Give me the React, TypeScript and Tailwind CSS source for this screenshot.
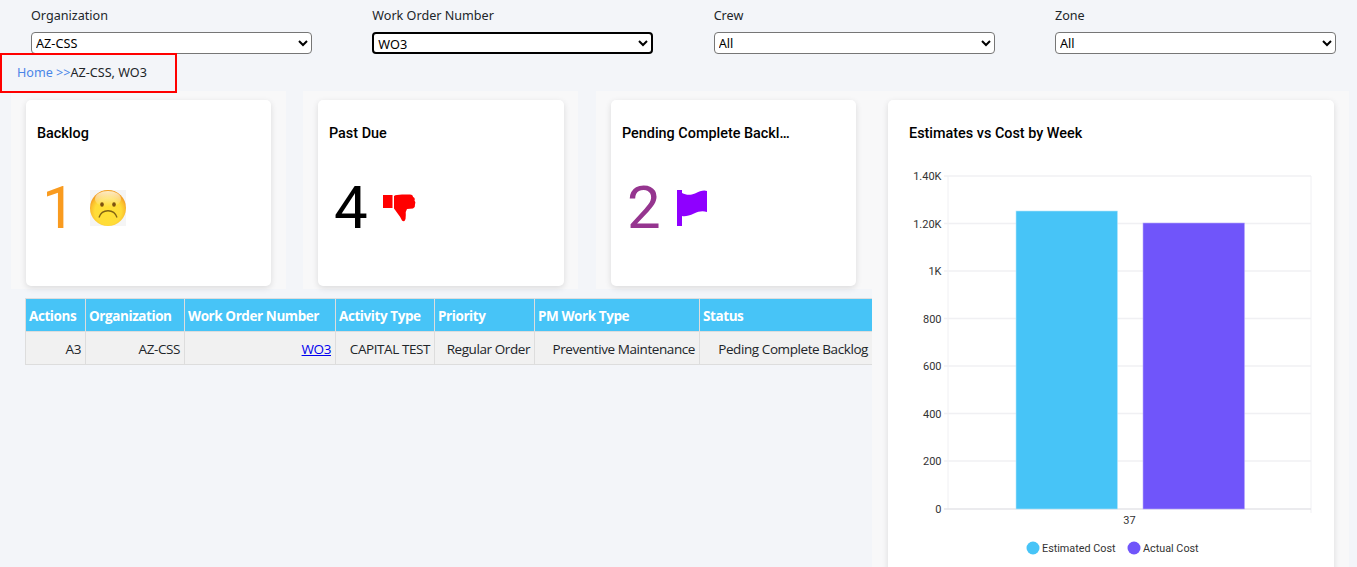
import React from 'react';

const filters = [
  { label: 'Organization', value: 'AZ-CSS' },
  { label: 'Work Order Number', value: 'WO3', focused: true },
  { label: 'Crew', value: 'All' },
  { label: 'Zone', value: 'All' },
];

const columns = [
  { title: 'Actions', width: 'w-[60px]' },
  { title: 'Organization', width: 'w-[99px]' },
  { title: 'Work Order Number', width: 'w-[151px]' },
  { title: 'Activity Type', width: 'w-[99px]' },
  { title: 'Priority', width: 'w-[100px]' },
  { title: 'PM Work Type', width: 'w-[165px]' },
  { title: 'Status', width: 'w-[173px]' },
];

const yTicks = [
  { label: '1.40K', y: 26 },
  { label: '1.20K', y: 73.5 },
  { label: '1K', y: 121 },
  { label: '800', y: 168.5 },
  { label: '600', y: 216 },
  { label: '400', y: 263.5 },
  { label: '200', y: 311 },
  { label: '0', y: 359 },
];

const SadFace = () => (
  <svg width="36" height="36" viewBox="0 0 36 36" className="bg-[#f5f5f5]">
    <defs>
      <radialGradient id="sadFill" cx="50%" cy="60%" r="54%">
        <stop offset="0%" stopColor="#ffe033" />
        <stop offset="68%" stopColor="#ffdc38" />
        <stop offset="88%" stopColor="#fbbf2d" />
        <stop offset="100%" stopColor="#f3a024" />
      </radialGradient>
      <linearGradient id="sadShine" x1="0" y1="0" x2="0" y2="1">
        <stop offset="0%" stopColor="#fff3d0" stopOpacity="0.95" />
        <stop offset="100%" stopColor="#fff3d0" stopOpacity="0" />
      </linearGradient>
    </defs>
    <circle cx="18" cy="18" r="18" fill="url(#sadFill)" />
    <ellipse cx="18" cy="9" rx="13" ry="8" fill="url(#sadShine)" />
    <ellipse cx="12" cy="14.5" rx="1.8" ry="2.2" fill="#7d5210" />
    <ellipse cx="24" cy="14.5" rx="1.8" ry="2.2" fill="#7d5210" />
    <path d="M9 27.5 C12 18.5 24 18.5 27 27.5" fill="none" stroke="#806214" strokeWidth="1.3" />
  </svg>
);

const ThumbDown = () => (
  <svg width="34" height="28" viewBox="0 0 34 28" fill="#ff0000">
    <rect x="1" y="1" width="9.5" height="13" />
    <path d="M12 2 Q14 .5 20 .5 L28 .5 Q31 .5 31 3 Q33.5 4 32.5 6.5 Q34 8 33 10.5 Q33.5 13 31 14.5 L25 15 Q23.5 17 23.8 21 Q24 25 22.5 27 Q21 27.5 20 26.5 Q18.5 23 16 20 Q13.5 16.5 12 14.5 Z" />
  </svg>
);

const Flag = () => (
  <svg width="33" height="36" viewBox="-1 0 33 36" fill="#8f00ff">
    <rect x="1" y="0" width="5" height="36" />
    <path d="M6 3 C10 5 14 5.5 19 3.5 C24 1 28 -.5 31 1 L31 22 C27 20.5 23 21 18 23.5 C13 26 9 26.5 6 26 Z" />
  </svg>
);

const StatCard = ({ title, value, color, icon, outer, cardWidth, titleWidth }: {
  title: string;
  value: number;
  color: string;
  icon: React.ReactNode;
  outer: string;
  cardWidth: string;
  titleWidth?: string;
}) => (
  <div className={`${outer} h-[198px] bg-[#f8f8f9] pt-[9px] pl-[15px]`}>
    <div className={`${cardWidth} h-[186px] bg-white rounded-[5px] shadow-[0_2px_6px_rgba(0,0,0,0.12)] px-[11px] pt-[25px]`}>
      <h3 className={`text-[14.4px] leading-[18px] font-medium text-black font-['Roboto',sans-serif] truncate ${titleWidth ?? ''}`}>{title}</h3>
      <div className="flex items-center mt-[29px] pl-[5px] h-[72px]">
        <span className={`text-[60px] leading-[72px] font-normal font-['Roboto',sans-serif] ${color}`}>{value}</span>
        <span className="ml-[14px] flex items-center">{icon}</span>
      </div>
    </div>
  </div>
);

const CostChart = () => (
  <svg width="446" height="420" viewBox="0 0 446 420" className="block mt-[7px] font-['Roboto',sans-serif]">
    <line x1="60" y1="26" x2="60" y2="359" stroke="#f0f0f3" />
    <line x1="423" y1="26" x2="423" y2="363" stroke="#f0f0f3" />
    {yTicks.map((t) => (
      <g key={t.label}>
        <line x1="56" y1={t.y} x2="423" y2={t.y} stroke={t.y === 359 ? '#e4e4e8' : '#f0f0f3'} strokeWidth="1.4" />
        <text x="53.5" y={t.y + 4} textAnchor="end" fontSize="11" fill="#333">{t.label}</text>
      </g>
    ))}
    <rect x="128" y="61" width="101.5" height="298" fill="#47c4f7" stroke="#b5e7fb" strokeWidth="0.6" />
    <rect x="255" y="73" width="101.5" height="286" fill="#7055fa" stroke="#b8abfc" strokeWidth="0.6" />
    <text x="241.5" y="374" textAnchor="middle" fontSize="11" fill="#333">37</text>
    <circle cx="145" cy="398" r="6.5" fill="#47c4f7" />
    <text x="154" y="402" fontSize="10.8" fill="#333">Estimated Cost</text>
    <circle cx="246" cy="398" r="6.5" fill="#7055fa" />
    <text x="255" y="402" fontSize="10.8" fill="#333">Actual Cost</text>
  </svg>
);

const App = () => {
  return (
    <div className="h-[567px] overflow-hidden bg-[#f3f5f9] font-['Noto_Sans',sans-serif]">
      <div className="flex h-[53px] pl-[31px]">
        {filters.map((f) => (
          <div key={f.label} className="w-[341.33px] shrink-0 pt-[7px]">
            <label className="block text-[12.6px] leading-[18px] text-[#212529]">{f.label}</label>
            <select
              defaultValue={f.value}
              className={`mt-[7px] w-[281px] h-[22px] rounded-[4px] bg-white text-[12.7px] text-black ${f.focused ? 'border-2 border-black' : 'border border-[#767676]'}`}
            >
              <option>{f.value}</option>
            </select>
          </div>
        ))}
      </div>

      <div className="relative z-10 w-[177px] h-[40px] mb-[-2px] border-2 border-[#ff0000] pl-[15px] flex items-center text-[12.6px] text-[#212529]">
        <span className="text-[#4a86e8]">Home &gt;&gt;</span>
        <span>AZ-CSS, WO3</span>
      </div>

      <div className="flex">
        <div className="w-[872px] shrink-0">
          <div className="flex pl-[11px]">
            <StatCard outer="w-[275px]" cardWidth="w-[245px]" title="Backlog" value={1} color="text-[#f99b1f]" icon={<SadFace />} />
            <StatCard outer="w-[275px] ml-[17px]" cardWidth="w-[246px]" title="Past Due" value={4} color="text-black" icon={<ThumbDown />} />
            <StatCard outer="w-[276px] ml-[18px]" cardWidth="w-[245px]" title="Pending Complete Backlog" titleWidth="w-[170px]" value={2} color="text-[#95358f]" icon={<Flag />} />
          </div>

          <div className="ml-[25px] mt-[9px] overflow-hidden">
            <table className="table-fixed border-collapse w-[847px] font-['Open_Sans',sans-serif] text-[13.5px] tracking-[-0.42px]">
              <thead>
                <tr className="bg-[#47c4f7] h-[33px]">
                  {columns.map((c) => (
                    <th key={c.title} className={`${c.width} border border-[#dddddd] px-[3px] pt-[3px] text-left font-bold text-white whitespace-nowrap`}>{c.title}</th>
                  ))}
                </tr>
              </thead>
              <tbody>
                <tr className="bg-[#f1f1f1] h-[33px] text-[#212529] text-right whitespace-nowrap">
                  <td className="border border-[#dddddd] pl-[3px] pr-[4px] pt-[3px]">A3</td>
                  <td className="border border-[#dddddd] pl-[3px] pr-[4px] pt-[3px]">AZ-CSS</td>
                  <td className="border border-[#dddddd] pl-[3px] pr-[4px] pt-[3px]"><a href="#wo3" className="text-[#0000ee] underline">WO3</a></td>
                  <td className="border border-[#dddddd] pl-[3px] pr-[4px] pt-[3px]">CAPITAL TEST</td>
                  <td className="border border-[#dddddd] pl-[3px] pr-[4px] pt-[3px]">Regular Order</td>
                  <td className="border border-[#dddddd] pl-[3px] pr-[4px] pt-[3px]">Preventive Maintenance</td>
                  <td className="border border-[#dddddd] pl-[3px] pr-[4px] pt-[3px]">Peding Complete Backlog</td>
                </tr>
              </tbody>
            </table>
          </div>
        </div>

        <div className="w-[477px] h-[480px] bg-[#f8f8f9] px-[16px] pt-[9px]">
          <div className="w-[446px] h-[480px] bg-white rounded-[5px] shadow-[0_2px_6px_rgba(0,0,0,0.12)] pt-[25px]">
            <h3 className="pl-[21px] text-[14.4px] leading-[18px] font-medium text-black font-['Roboto',sans-serif]">Estimates vs Cost by Week</h3>
            <CostChart />
          </div>
        </div>
      </div>
    </div>
  );
};

export default App;
